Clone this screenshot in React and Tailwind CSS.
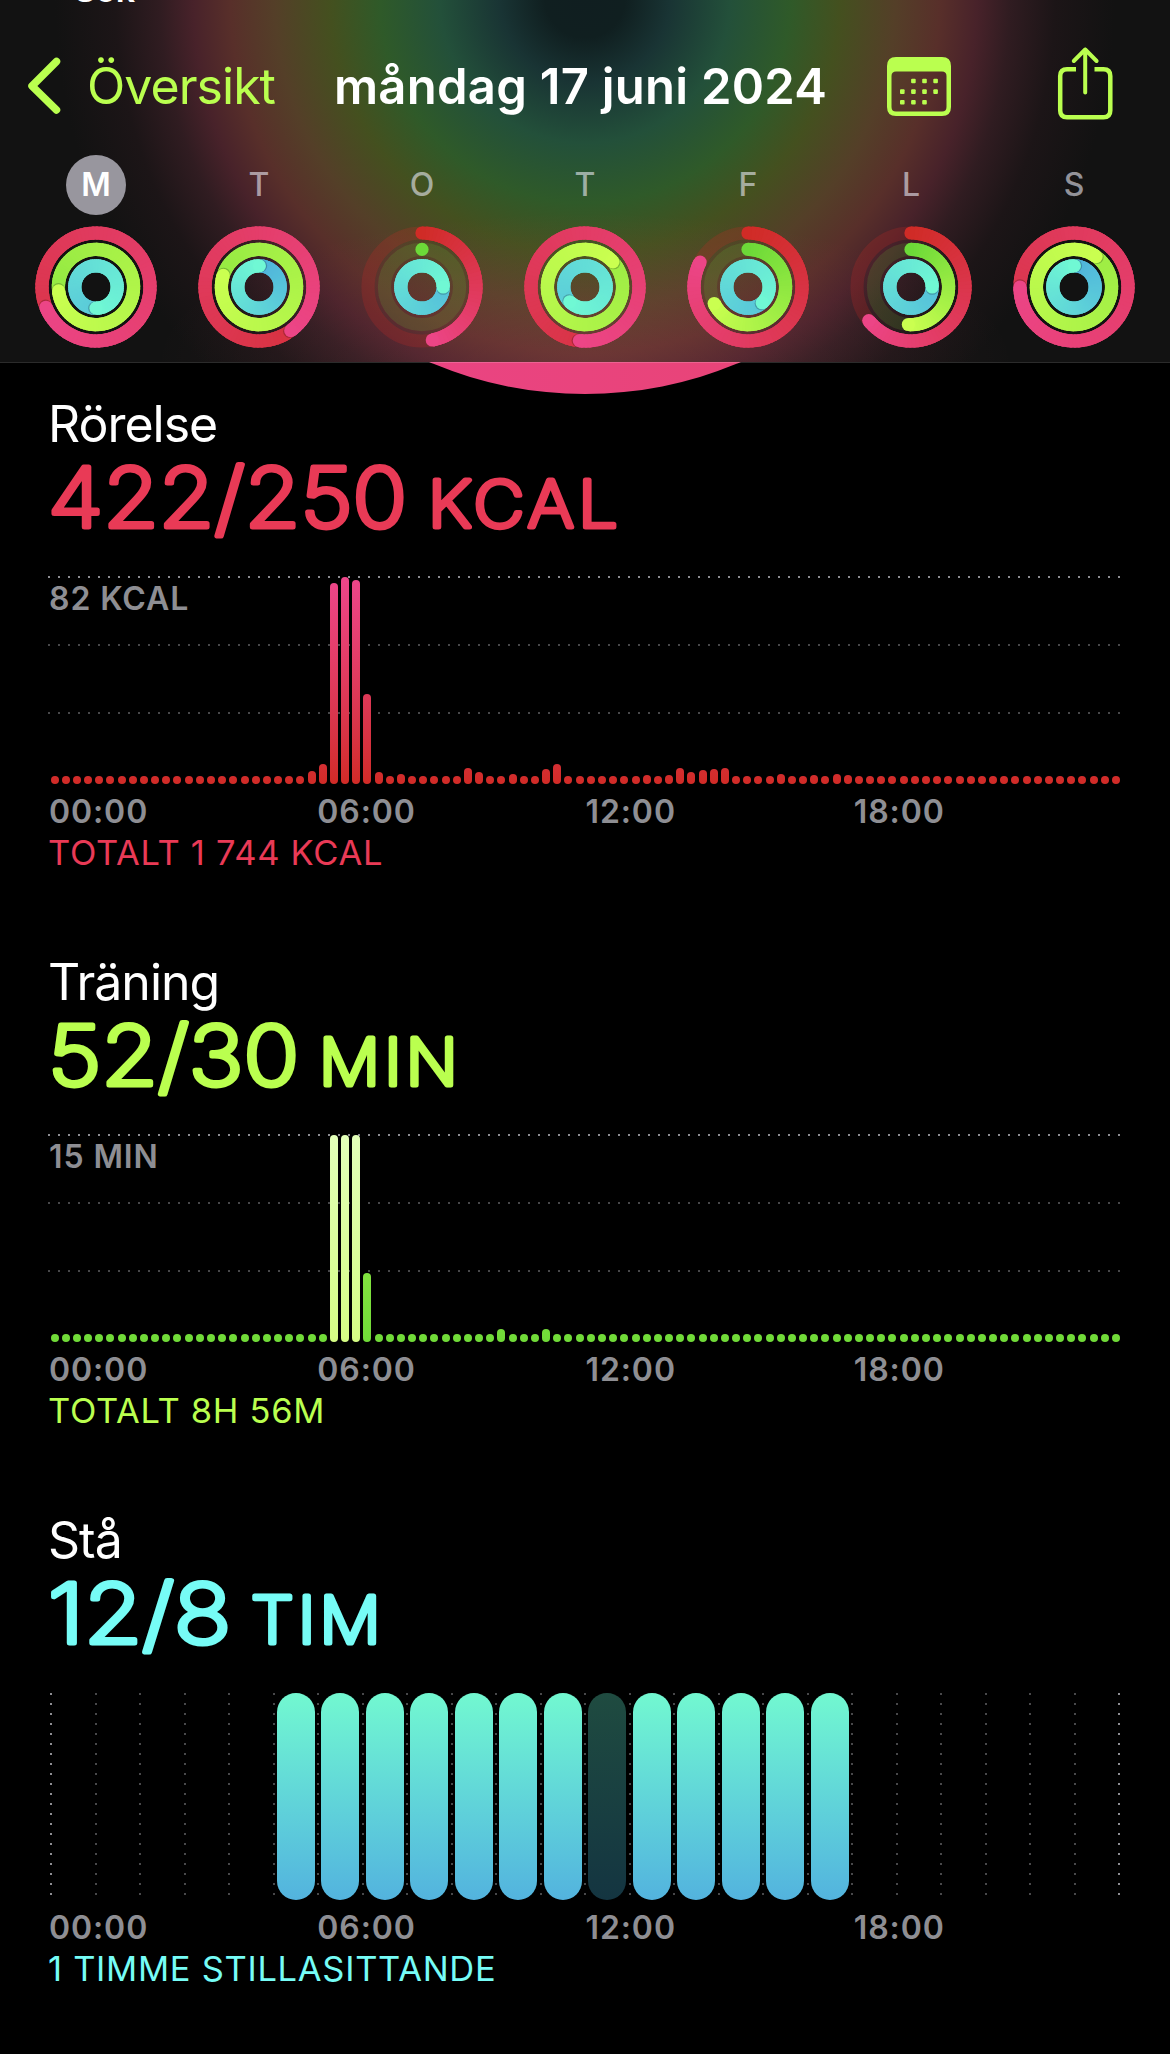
const RED = [[208, 43, 38], [236, 69, 134]];
const GREEN = [[108, 217, 56], [202, 255, 80]];
const BLUE = [[79, 178, 220], [112, 248, 212]];

// Angles in degrees, more than 360 means the ring has lapped
const days = [
  { label: "M", selected: true, move: 608, exercise: 624, stand: 540 },
  { label: "T", move: 504, exercise: 648, stand: 361 },
  { label: "O", move: 169, exercise: 0, stand: 450 },
  { label: "T", move: 546, exercise: 768, stand: 586 },
  { label: "F", move: 297.5, exercise: 244, stand: 498 },
  { label: "L", move: 231.5, exercise: 184, stand: 450 },
  { label: "S", move: 630, exercise: 756, stand: 361 },
];

const hours = ["00:00", "06:00", "12:00", "18:00"];

const moveValues = {
  23: 13, 24: 20, 25: 201, 26: 207, 27: 204, 28: 90, 29: 12, 31: 10,
  37: 16, 38: 12, 41: 10.5, 44: 15, 45: 20.5, 53: 9, 55: 9.5, 56: 16.5,
  57: 12, 58: 14, 59: 15, 60: 16.5, 65: 10, 68: 9, 70: 10, 71: 9,
};

const exerciseValues = { 25: 207, 26: 207, 27: 207, 28: 69, 40: 13.5, 44: 13.5 };

function mix([a, b], t) {
  const c = a.map((v, i) => Math.round(v + (b[i] - v) * t));
  return `rgb(${c[0]},${c[1]},${c[2]})`;
}

function point(r, deg) {
  const a = (deg * Math.PI) / 180;
  return [61 + r * Math.sin(a), 61 - r * Math.cos(a)];
}

function Ring({ r, total, colors, track }) {
  const start = Math.max(0, total - 360);
  const steps = Math.ceil((total - start) / 4);
  const size = steps ? (total - start) / steps : 0;
  const [sx, sy] = point(r, start);
  const [ex, ey] = point(r, total);
  const [hx, hy] = point(r, total + 70 / r);

  return (
    <g fill="none" strokeWidth="13.2">
      {total < 360 && (
        <circle cx="61" cy="61" r={r} stroke={mix(colors, 0)} opacity={track} />
      )}
      {total < 360 && (
        <circle cx={sx} cy={sy} r="6.6" fill={mix(colors, 0)} />
      )}
      {Array.from({ length: steps }, (_, i) => {
        // Each piece runs under the next one so that no seams show
        const from = start + i * size;
        const to = Math.min(from + size + 6, total);
        const [x1, y1] = point(r, from);
        const [x2, y2] = point(r, to);
        return (
          <path
            key={i}
            d={`M${x1} ${y1}A${r} ${r} 0 0 1 ${x2} ${y2}`}
            stroke={mix(colors, (from + size / 2) / total)}
          />
        );
      })}
      {total > 360 && <circle cx={hx} cy={hy} r="6.6" fill="#000" opacity="0.22" />}
      {total > 0 && <circle cx={ex} cy={ey} r="6.6" fill={mix(colors, 1)} />}
    </g>
  );
}

function Day({ day }) {
  return (
    <div className="flex flex-col items-center gap-[11px]">
      <div
        className={`flex h-[60px] w-[60px] items-center justify-center rounded-full text-[32px] ${
          day.selected ? "bg-[#98969e] font-semibold text-white" : "font-medium text-[#ebebf5]/60"
        }`}
      >
        {day.label}
      </div>
      <svg width="122" height="122" viewBox="0 0 122 122">
        <Ring r={54} total={day.move} colors={RED} track={0.22} />
        <Ring r={37.6} total={day.exercise} colors={GREEN} track={0.15} />
        <Ring r={21.2} total={day.stand} colors={BLUE} track={0.2} />
      </svg>
    </div>
  );
}

function ChevronIcon() {
  return (
    <svg width="36" height="60" viewBox="0 0 36 60" fill="none">
      <path
        d="M30.5 5.5L6 30L30.5 54"
        stroke="#baff4f"
        strokeWidth="7.5"
        strokeLinecap="round"
        strokeLinejoin="round"
      />
    </svg>
  );
}

function CalendarIcon() {
  const dots = [[1, 0], [2, 0], [3, 0], [0, 1], [1, 1], [2, 1], [3, 1], [0, 2], [1, 2], [2, 2]];
  return (
    <svg width="64" height="60" viewBox="0 0 64 60" fill="#baff4f">
      <path
        fillRule="evenodd"
        d="M9 1H55Q64 1 64 10V51Q64 60 55 60H9Q0 60 0 51V10Q0 1 9 1ZM9 15.5Q4.5 15.5 4.5 20V51Q4.5 55.5 9 55.5H55Q59.5 55.5 59.5 51V20Q59.5 15.5 55 15.5Z"
      />
      {dots.map(([x, y]) => (
        <rect key={`${x}-${y}`} x={13 + x * 11.1} y={22.7 + y * 10.6} width="4.6" height="4.6" rx="1" />
      ))}
    </svg>
  );
}

function ShareIcon() {
  return (
    <svg
      width="58"
      height="74"
      viewBox="0 0 58 74"
      fill="none"
      stroke="#baff4f"
      strokeWidth="4.5"
      strokeLinejoin="round"
    >
      <path d="M20 23.2H11Q4.2 23.2 4.2 30V64.5Q4.2 71.2 11 71.2H47.5Q54.3 71.2 54.3 64.5V30Q54.3 23.2 47.5 23.2H38.5" />
      <path strokeLinecap="round" strokeWidth="4" d="M29.2 3.5V46.5M17.8 15L29.2 3.5L40.6 15" />
    </svg>
  );
}

function Header() {
  return (
    <header className="relative h-[362px] overflow-hidden bg-[#121212] bg-[radial-gradient(circle_at_585px_-2px,#101e20_0px,#101f20_40px,#193434_85px,#23503a_145px,#2f5a29_205px,#44501f_255px,#543f28_310px,#582f2a_355px,#48222a_392px,#301c21_425px,#1c1517_470px,#121212_530px)]">
      <div className="absolute inset-0 bg-[radial-gradient(ellipse_430px_150px_at_50%_100%,rgba(255,110,130,0.13),transparent)]" />
      <div className="relative">
        <div className="-mt-[28px] flex h-9 items-center gap-2 pl-[50px] text-[34px] leading-[36px] font-semibold tracking-[-0.5px] text-white">
          <svg width="16" height="24" viewBox="0 0 16 24" fill="#fff">
            <path d="M14 1V22L1 11.5Z" />
          </svg>
          Sök
        </div>

        <nav className="mt-[23px] flex h-[110px] items-center">
          <div className="ml-[26px] flex w-[308px] items-center">
            <ChevronIcon />
            <span className="ml-[25px] text-[50px] tracking-[-0.95px] text-[#baff4f]">Översikt</span>
          </div>
          <h1 className="mt-px w-[553px] text-[49px] font-semibold tracking-[0.25px] whitespace-nowrap text-white">
            måndag 17 juni 2024
          </h1>
          <CalendarIcon />
          <div className="-mt-[6px] ml-[105px]">
            <ShareIcon />
          </div>
        </nav>

        <div className="mt-[14px] grid grid-cols-7 px-[14.5px]">
          {days.map((day, i) => (
            <Day key={i} day={day} />
          ))}
        </div>
      </div>
    </header>
  );
}

// Bottom edge of the large move ring, scrolled under the header
function RingEdge() {
  return (
    <div className="relative flex h-8 justify-center overflow-hidden">
      <svg width="800" height="32" viewBox="0 0 800 32">
        <defs>
          <linearGradient id="edge">
            <stop offset="0.3" stopColor="#ea4482" />
            <stop offset="0.7" stopColor="#e84478" />
          </linearGradient>
        </defs>
        <circle cx="400" cy="-364" r="396" fill="url(#edge)" />
      </svg>
      <div className="absolute inset-x-0 top-0 h-px bg-white/17" />
    </div>
  );
}

// Thin text with a round-joined stroke gives the rounded letter ends
function RoundedValue({ value, valueWidth, unit, unitX, unitWidth, color }) {
  return (
    <svg
      className={`block overflow-visible ${color}`}
      width="1072"
      height="85"
      viewBox="0 0 1072 85"
      fill="currentColor"
      stroke="currentColor"
      strokeWidth="5"
      strokeLinejoin="round"
      strokeLinecap="round"
    >
      <text
        x="-1"
        y="72.5"
        textLength={valueWidth}
        lengthAdjust="spacingAndGlyphs"
        className="text-[82px] font-extralight"
      >
        {value}
      </text>
      <text
        x={unitX}
        y="72.5"
        textLength={unitWidth}
        lengthAdjust="spacingAndGlyphs"
        className="text-[64px] font-extralight tracking-[4px]"
      >
        {unit}
      </text>
    </svg>
  );
}

function HourLabels() {
  return (
    <div className="mt-2 grid w-[1073px] grid-cols-4 text-[32px] leading-[40px] font-semibold tracking-[0.9px] text-[#8e8e93]">
      {hours.map((h) => (
        <span key={h}>{h}</span>
      ))}
    </div>
  );
}

function Section({ title, color, total, children, ...value }) {
  return (
    <section className="h-[558px] pl-[49px]">
      <h2 className="-ml-px text-[50px] leading-[60px] tracking-[-1px] text-white">{title}</h2>
      <RoundedValue color={color} {...value} />
      {children}
      <HourLabels />
      <div className={`-ml-px text-[34.5px] leading-[42px] tracking-[0.7px] ${color}`}>{total}</div>
    </section>
  );
}

function GridLine({ bright }) {
  return (
    <div
      className={`h-0.5 ${
        bright
          ? "bg-[repeating-linear-gradient(90deg,#8e8e93_0px_2px,transparent_2px_10px)]"
          : "bg-[repeating-linear-gradient(90deg,#48484a_0px_2px,transparent_2px_10px)]"
      }`}
    />
  );
}

function QuarterChart({ values, label, barClass }) {
  return (
    <div className="relative mt-[37px] h-[208px] w-[1072px]">
      <div className="-ml-px flex h-[138px] flex-col justify-between">
        <GridLine bright />
        <GridLine />
        <GridLine />
      </div>
      <div className="absolute top-[3px] left-0 text-[32px] leading-[40px] font-semibold tracking-[0.9px] text-[#8e8e93]">
        {label}
      </div>
      <div className="absolute inset-0 flex items-end">
        {Array.from({ length: 96 }, (_, i) => (
          <div key={i} className="flex flex-1 justify-center">
            <div
              className={`w-2 rounded-full bg-[length:100%_208px] bg-bottom bg-no-repeat ${barClass(i)}`}
              style={{ height: values[i] || 8 }}
            />
          </div>
        ))}
      </div>
    </div>
  );
}

function StandChart() {
  return (
    <div className="relative mt-[38px] ml-px h-[207px] w-[1070px]">
      <div className="flex h-[202px] justify-between">
        {Array.from({ length: 25 }, (_, i) => (
          <div
            key={i}
            className={`w-0.5 ${
              i === 0 || i === 24
                ? "bg-[repeating-linear-gradient(180deg,#8e8e93_0px_2px,transparent_2px_10px)]"
                : "bg-[repeating-linear-gradient(180deg,#48484a_0px_2px,transparent_2px_10px)]"
            }`}
          />
        ))}
      </div>
      <div className="absolute inset-0 grid grid-cols-24 px-px">
        {Array.from({ length: 24 }, (_, i) => (
          <div key={i} className="flex justify-center">
            {i >= 5 && i <= 17 && (
              <div
                className={`w-[38px] rounded-full ${
                  i === 12
                    ? "bg-linear-to-b from-[#1f4b40] to-[#143541]"
                    : "bg-linear-to-b from-[#72f8d0] to-[#53b3de]"
                }`}
              />
            )}
          </div>
        ))}
      </div>
    </div>
  );
}

export default function App() {
  return (
    <div className="h-[2054px] w-[1170px] overflow-hidden bg-black font-['Inter',sans-serif]">
      <Header />
      <RingEdge />

      <Section
        title="Rörelse"
        value="422/250"
        valueWidth={359}
        unit="KCAL"
        unitX={379}
        unitWidth={194}
        color="text-[#e93a56]"
        total="TOTALT 1 744 KCAL"
      >
        <QuarterChart
          values={moveValues}
          label="82 KCAL"
          barClass={() => "bg-linear-to-t from-[#d12b26] to-[#ee468b]"}
        />
      </Section>

      <Section
        title="Träning"
        value="52/30"
        valueWidth={251}
        unit="MIN"
        unitX={270}
        unitWidth={143}
        color="text-[#baff4f]"
        total="TOTALT 8H 56M"
      >
        <QuarterChart
          values={exerciseValues}
          label="15 MIN"
          barClass={(i) =>
            i >= 25 && i <= 27
              ? "bg-linear-to-t from-[#d6fd84] to-[#e2ffb8]"
              : "bg-linear-to-t from-[#70da38] to-[#a6f84f]"
          }
        />
      </Section>

      <Section
        title="Stå"
        value="12/8"
        valueWidth={183}
        unit="TIM"
        unitX={202}
        unitWidth={134}
        color="text-[#76fcf6]"
        total="1 TIMME STILLASITTANDE"
      >
        <StandChart />
      </Section>
    </div>
  );
}
